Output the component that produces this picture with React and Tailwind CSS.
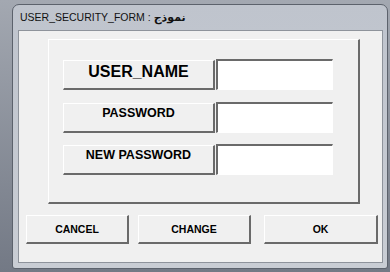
import React from 'react';

const raised =
  'border-t border-l border-t-white border-l-white border-b-2 border-r-2 border-b-[#6a6a6a] border-r-[#6a6a6a]';
const sunken =
  'border-t-2 border-l-2 border-t-[#6a6a6a] border-l-[#6a6a6a] border-b border-r border-b-white border-r-white';

const rows = [
  { label: 'USER_NAME', size: 'text-[16px] pb-[5px]', mt: 'mt-0' },
  { label: 'PASSWORD', size: 'text-[12.5px] pb-[7px]', mt: 'mt-[12px]' },
  { label: 'NEW PASSWORD', size: 'text-[12.5px] pb-[8px]', mt: 'mt-[11px]' },
];

const buttons = [
  { label: 'CANCEL', w: 'w-[103px]', ml: 'ml-[7px]' },
  { label: 'CHANGE', w: 'w-[113px]', ml: 'ml-[9px]' },
  { label: 'OK', w: 'w-[114px]', ml: 'ml-[13px]' },
];

export default function App() {
  return (
    <div className="w-[390px] h-[272px] overflow-hidden bg-gradient-to-b from-[#a3a8b1] to-[#737985] pl-[12px] pt-[4px] font-['Liberation_Sans','DejaVu_Sans',sans-serif] text-black">
      {/* window frame */}
      <div className="w-[376px] h-[265px] rounded-t-[7px] rounded-b-[3px] border border-[#5c626c] bg-gradient-to-b from-[#bfc4cd] to-[#c9cdd4] flex flex-col">
        {/* title bar */}
        <div className="h-[25px] flex items-center pl-[7px] text-[10.5px] text-[#111] leading-none">
          USER_SECURITY_FORM : <span className="ml-[3px] text-[11px] font-bold">نموذج</span>
        </div>

        {/* client area */}
        <div className="ml-[5px] w-[365px] h-[233px] border border-[#8e939b] bg-[#f0f0f0]">
          {/* group box */}
          <div className="ml-[29px] mt-[8px] w-[312px] h-[165px] border-t border-l border-t-white border-l-white border-b-2 border-r-2 border-b-[#6a6a6a] border-r-[#6a6a6a] pl-[14px] pt-[19px]">
            {rows.map(({ label, size, mt }) => (
              <div key={label} className={`flex items-center ${mt}`}>
                <div className={`w-[152px] h-[30px] ${raised} flex items-center justify-center font-bold ${size} leading-none`}>
                  {label}
                </div>
                <div className={`ml-[1px] w-[117px] h-[31px] bg-white ${sunken}`} />
              </div>
            ))}
          </div>

          {/* buttons */}
          <div className="flex mt-[11px]">
            {buttons.map(({ label, w, ml }) => (
              <div
                key={label}
                className={`${w} ${ml} h-[29px] ${raised} flex items-center justify-center font-bold text-[10.5px] leading-none pt-[1px]`}
              >
                {label}
              </div>
            ))}
          </div>
        </div>
      </div>
    </div>
  );
}
